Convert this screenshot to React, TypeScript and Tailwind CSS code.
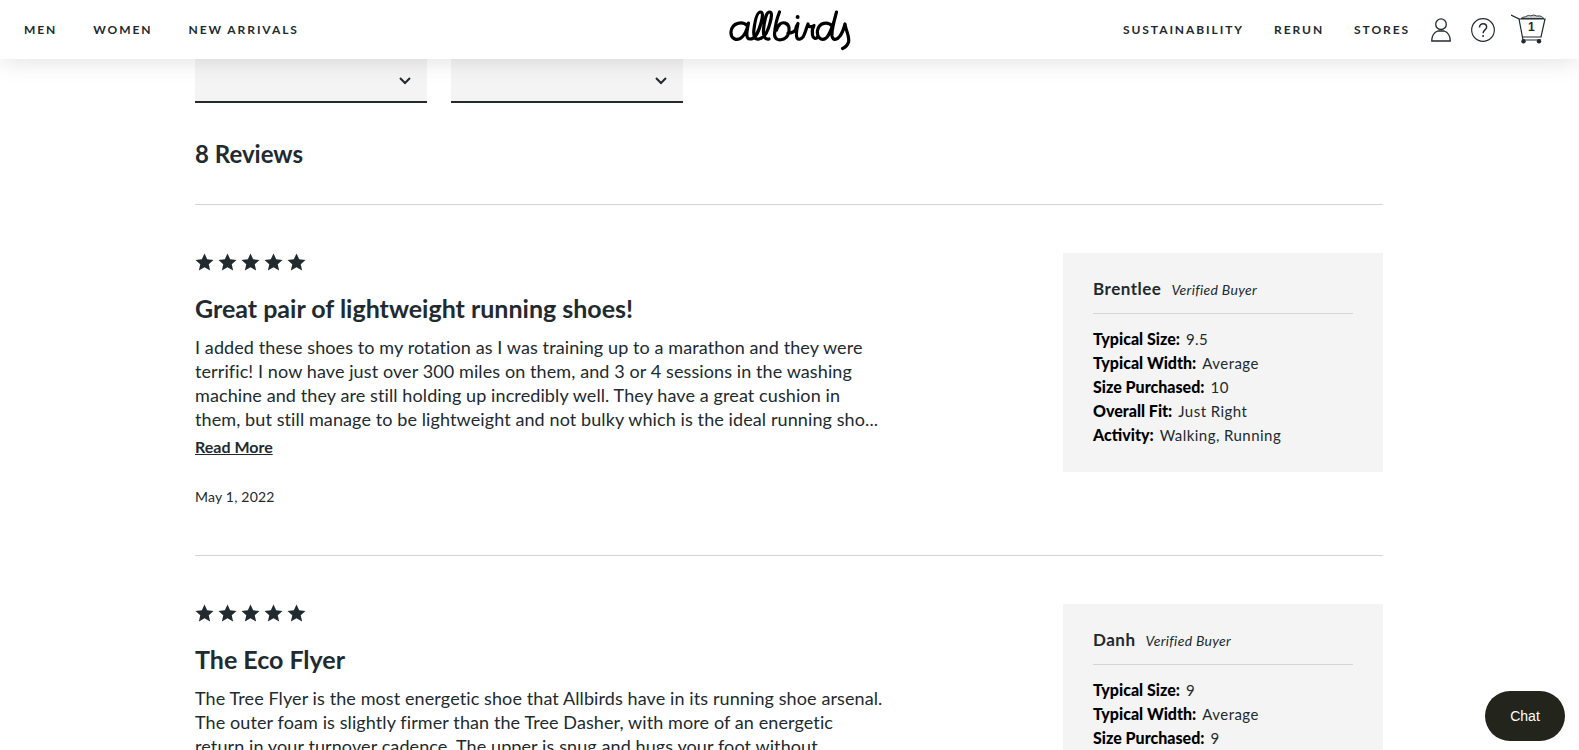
import React from "react";

const Star = () => (
  <svg width="19" height="18" viewBox="0 0 24 23" className="fill-[#212a2f]">
    <path d="M12 0.5l3.4 7.6 8.1 0.8-6.1 5.5 1.8 8.1L12 18.3l-7.2 4.2 1.800-8.1L0.5 8.9l8.100-0.8z" />
  </svg>
);

const Chevron = () => (
  <svg width="12" height="8" viewBox="0 0 12 8" fill="none" stroke="#212a2f" strokeWidth="2">
    <path d="M1 1l5 5 5-5" />
  </svg>
);

const Logo = () => (
  <svg width="122" height="42" viewBox="0 0 122 42" fill="none" stroke="#000" strokeWidth="3.200" strokeLinecap="round" strokeLinejoin="round">
    <path d="M18.500 17C14 12 3 13 2 23C1.500 30 8 32 12 29C16 26 18 21 19.500 14C18 22 16 30 21 30C26 30 30 22 32 14C34 7 34 3 31.500 3C28 3 26 12 25 20C24 27 26 31 30 30C35 29 39 22 41 14C43 7 43 3 40.500 3C37 3 35 14 34.500 21C34 27 36 31 40 30" />
    <path d="M50.500 3C48 9 46 19 45.500 25C45.500 30 49 31.500 53 30.500C58 29.500 61 24 60 18.500C59 14 54 12.500 51 15C49 17 48 19 47.500 21" />
    <path d="M59 24C62 24 65 23 66.500 21" />
    <path d="M66.500 21C67 18.500 68 16 69 14.500C68 19 66.500 26 68 29C69.500 31 72 30.500 74 28C76 25 77 20 79 15C79 18 82 18.500 85 16.500C83.500 19 83 23 83.500 26C84 29.500 87 30.500 88.500 28" />
    <path d="M103 17C99 12 90 13.500 88.500 21.500C87.500 28 92 32 96.500 29.500C100.500 27 105 14 107.500 3C105 12 102.500 23 103 27C104 32 108 31 111 27C113.500 23.500 115 19 116 15C116.500 21 121 27 119.500 33C118.500 36.500 116 38.500 113.500 39.500" />
    <circle cx="68.600" cy="8" r="2" fill="#000" stroke="none" />
  </svg>
);

const User = () => (
  <svg width="20" height="24" viewBox="0 0 20 24" fill="none" stroke="#212a2f" strokeWidth="1.300">
    <circle cx="10" cy="6.200" r="5.300" />
    <path d="M.8 23c-.3-5 2.500-9 6-10h6.400c3.500 1 6.300 5 6 10z" />
  </svg>
);

const Help = () => (
  <svg width="24" height="24" viewBox="0 0 25 25" fill="none" stroke="#212a2f" strokeWidth="1.200">
    <circle cx="12.500" cy="12.500" r="11.800" />
    <path d="M8.800 9.800c0-2.400 1.700-3.900 3.800-3.900s3.700 1.400 3.700 3.400c0 3-3.700 3.200-3.700 6.500" strokeWidth="1.500" />
    <circle cx="12.600" cy="18.700" r="1" fill="#212a2f" stroke="none" />
  </svg>
);

const Cart = () => (
  <svg width="35" height="31" viewBox="0 0 35 31" fill="none" stroke="#212a2f" strokeWidth="1.200">
    <path d="M0 2l8 4 4 21h18" />
    <path d="M8 6h26l-4 18H11.500" />
    <path d="M10 5.500c2-2 4-1 6-2.500 2-1.500 3 .5 5-.5 2-1.500 4 1 6 .5 3-.5 4 1 6 2.500z" fill="#212a2f" fillOpacity="0.250" strokeWidth="0.900" />
    <circle cx="12.500" cy="28.300" r="2.200" fill="#212a2f" stroke="none" />
    <circle cx="28" cy="28.300" r="2.200" fill="#212a2f" stroke="none" />
  </svg>
);

const NavLink = ({ children }: { children: React.ReactNode }) => (
  <a className="text-[12px] font-bold tracking-[0.16em] text-[#212a2f] whitespace-nowrap">{children}</a>
);

type Attr = [string, string];

const Review = ({
  title,
  lines,
  more,
  date,
  name,
  attrs,
}: {
  title: string;
  lines: string[];
  more?: boolean;
  date?: string;
  name: string;
  attrs: Attr[];
}) => (
  <div className="flex justify-between pt-[48px] pb-[48px] border-b border-[#d5d5d5] last:border-b-0">
    <div className="w-[700px]">
      <div className="flex gap-[4px]">
        <Star /><Star /><Star /><Star /><Star />
      </div>
      <h3 className="mt-[22px] text-[25px] leading-[30px] font-bold text-[#212a2f]">{title}</h3>
      <div className="mt-[12px] text-[18px] leading-[24px] tracking-[0.1px] text-[#212a2f]">
        {lines.map((l) => (
          <div key={l} className="whitespace-nowrap">{l}</div>
        ))}
      </div>
      {more && (
        <a className="block mt-[6px] text-[16px] leading-[20px] font-bold underline text-[#212a2f]">Read More</a>
      )}
      {date && <div className="mt-[30px] text-[14px] tracking-[0.2px] leading-[20px] text-[#212a2f]">{date}</div>}
    </div>
    <aside className="w-[320px] h-[219px] shrink-0 bg-[#f4f4f4] px-[30px] pt-[24px]">
      <div className="flex items-center gap-[10px] h-[24px]">
        <span className="text-[17px] font-bold tracking-[0.03em] text-[#212a2f]">{name}</span>
        <span className="text-[14px] italic tracking-[0.3px] text-[#212a2f]">Verified Buyer</span>
      </div>
      <div className="mt-[12px] border-t border-[#d5d5d5]" />
      <div className="mt-[13px] leading-[24px] text-[#212a2f]">
        {attrs.map(([k, v]) => (
          <div key={k} className="flex items-baseline gap-[6px] whitespace-nowrap">
            <span className="text-[16px] font-black text-black">{k}</span>
            <span className="text-[15px] tracking-[0.03em]">{v}</span>
          </div>
        ))}
      </div>
    </aside>
  </div>
);

export default function App() {
  return (
    <div className="relative h-[750px] overflow-hidden bg-white font-['Lato',sans-serif] flex flex-col">
      <header className="relative z-10 h-[59px] shrink-0 bg-white shadow-[0_2px_24px_rgba(0,0,0,0.12)] flex items-center justify-between pl-[24px] pr-[33px]">
        <nav className="flex-1 flex gap-[36px]">
          <NavLink>MEN</NavLink>
          <NavLink>WOMEN</NavLink>
          <NavLink>NEW ARRIVALS</NavLink>
        </nav>
        <div className="ml-[9px]"><Logo /></div>
        <div className="flex-1 flex items-center justify-end">
          <div className="flex gap-[30px] mr-[21px]">
            <NavLink>SUSTAINABILITY</NavLink>
            <NavLink>RERUN</NavLink>
            <NavLink>STORES</NavLink>
          </div>
          <User />
          <div className="ml-[20px]"><Help /></div>
          <div className="relative ml-[16px] -mt-[3px]">
            <Cart />
            <span className="absolute left-[17px] top-[6px] text-[12px] leading-[16px] font-['Liberation_Sans',sans-serif] font-bold text-[#212a2f]">1</span>
          </div>
        </div>
      </header>
      <main className="ml-[195px] w-[1188px]">
        <div className="flex gap-[24px]">
          <div className="w-[232px] h-[44px] bg-[#f4f4f4] border-b-2 border-[#212a2f] flex items-center justify-end pr-[16px] pt-[2px]"><Chevron /></div>
          <div className="w-[232px] h-[44px] bg-[#f4f4f4] border-b-2 border-[#212a2f] flex items-center justify-end pr-[16px] pt-[2px]"><Chevron /></div>
        </div>
        <h2 className="mt-[36px] text-[24px] leading-[30px] font-bold text-[#212a2f] pb-[35px] border-b border-[#d5d5d5]">8 Reviews</h2>
        <Review
          title="Great pair of lightweight running shoes!"
          lines={[
            "I added these shoes to my rotation as I was training up to a marathon and they were",
            "terrific! I now have just over 300 miles on them, and 3 or 4 sessions in the washing",
            "machine and they are still holding up incredibly well. They have a great cushion in",
            "them, but still manage to be lightweight and not bulky which is the ideal running sho...",
          ]}
          more
          date="May 1, 2022"
          name="Brentlee"
          attrs={[
            ["Typical Size:", "9.5"],
            ["Typical Width:", "Average"],
            ["Size Purchased:", "10"],
            ["Overall Fit:", "Just Right"],
            ["Activity:", "Walking, Running"],
          ]}
        />
        <Review
          title="The Eco Flyer"
          lines={[
            "The Tree Flyer is the most energetic shoe that Allbirds have in its running shoe arsenal.",
            "The outer foam is slightly firmer than the Tree Dasher, with more of an energetic",
            "return in your turnover cadence. The upper is snug and hugs your foot without",
          ]}
          name="Danh"
          attrs={[
            ["Typical Size:", "9"],
            ["Typical Width:", "Average"],
            ["Size Purchased:", "9"],
          ]}
        />
      </main>
      <button className="absolute z-20 left-[1485px] top-[691px] w-[80px] h-[50px] rounded-[25px] bg-[#23241c] text-white text-[14px] font-['Liberation_Sans',sans-serif]">Chat</button>
    </div>
  );
}
